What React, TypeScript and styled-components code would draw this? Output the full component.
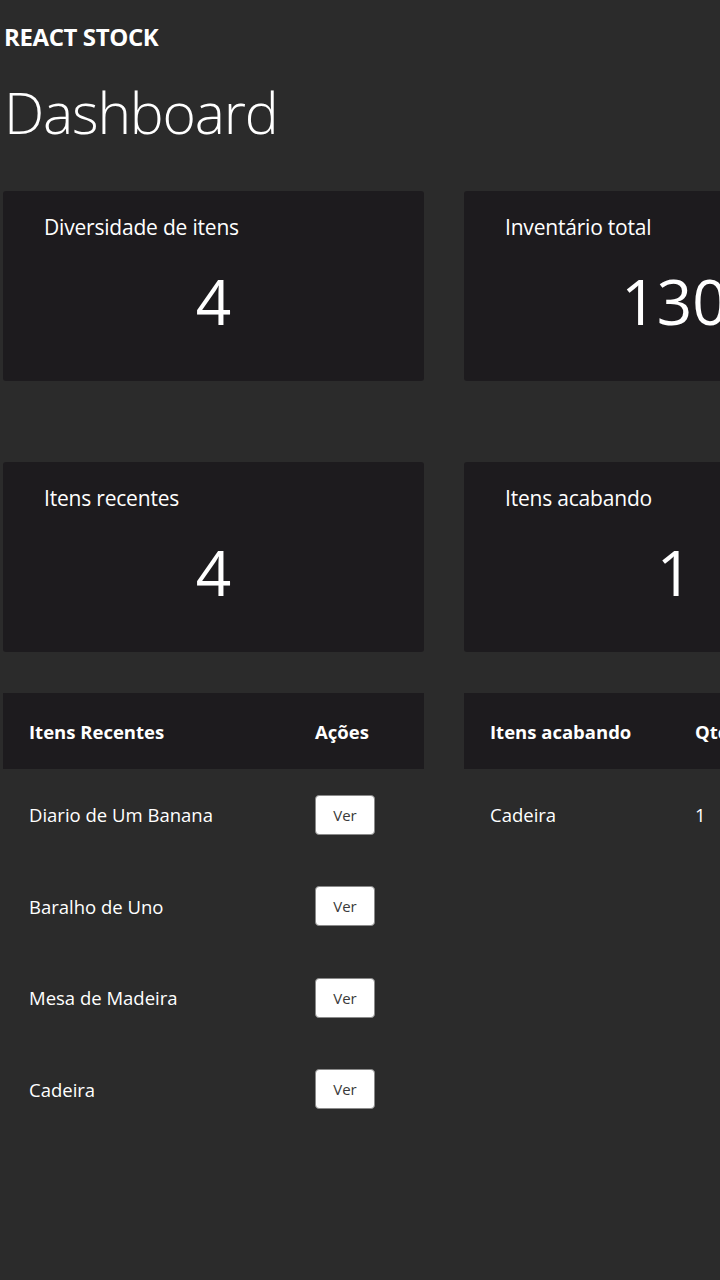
import React from "react";
import styled, { createGlobalStyle } from "styled-components";

const Global = createGlobalStyle`
  html, body {
    margin: 0;
    padding: 0;
    background: #2b2b2b;
    overflow: hidden;
  }
  body {
    font-family: "Open Sans", "Noto Sans", sans-serif;
    color: #ffffff;
  }
`;

const Page = styled.div`
  width: 720px;
  min-height: 1280px;
  overflow: hidden;
  padding: 0 0 0 3px;
  box-sizing: border-box;
`;

const Brand = styled.header`
  font-size: 24px;
  font-weight: 700;
  letter-spacing: -0.4px;
  height: 72px;
  display: flex;
  align-items: center;
  padding-left: 1px;
`;

const Title = styled.h1`
  margin: 0;
  font-size: 57px;
  font-weight: 300;
  letter-spacing: -1.2px;
  line-height: 80px;
  height: 80px;
  padding-left: 1px;
`;

const CardRow = styled.section<{ $mt: number }>`
  display: flex;
  align-items: flex-start;
  gap: 40px;
  margin-top: ${(p) => p.$mt}px;
`;

const Card = styled.div`
  flex: 0 0 421px;
  width: 421px;
  height: 190px;
  background: #1d1b1e;
  border-radius: 3px;
  box-sizing: border-box;
  padding: 22px 0 0 41px;
  display: flex;
  flex-direction: column;
`;

const CardLabel = styled.span`
  font-size: 21px;
  letter-spacing: -0.2px;
  line-height: 28px;
`;

const CardValue = styled.span`
  font-size: 62px;
  font-weight: 400;
  line-height: 70px;
  margin-top: 25px;
  text-align: center;
  padding-right: 41px;
`;

const Table = styled.table<{ $col: number }>`
  flex: 0 0 421px;
  width: 421px;
  border-collapse: collapse;
  font-size: 18.5px;
  th, td {
    padding: 0 0 0 26px;
    text-align: left;
  }
  th:first-child, td:first-child {
    width: ${(p) => p.$col}px;
  }
`;

const Head = styled.thead`
  background: #1d1b1e;
  th {
    height: 76px;
    font-weight: 700;
  }
`;

const Row = styled.tr`
  td {
    height: 91.5px;
  }
`;

const VerButton = styled.button`
  width: 60px;
  height: 40px;
  background: #ffffff;
  border: 1px solid #8a8a8a;
  border-radius: 4px;
  font-family: "Open Sans", sans-serif;
  font-size: 15px;
  color: #3a3a3a;
  padding: 0;
  cursor: pointer;
`;

const stats = [
  [
    { label: "Diversidade de itens", value: 4 },
    { label: "Inventário total", value: 130 },
  ],
  [
    { label: "Itens recentes", value: 4 },
    { label: "Itens acabando", value: 1 },
  ],
];

const recent = ["Diario de Um Banana", "Baralho de Uno", "Mesa de Madeira", "Cadeira"];
const ending = [{ name: "Cadeira", qty: 1 }];

export default function App() {
  return (
    <Page>
      <Global />
      <Brand>REACT STOCK</Brand>
      <Title>Dashboard</Title>
      {stats.map((row, i) => (
        <CardRow key={i} $mt={i === 0 ? 39 : 81}>
          {row.map((s) => (
            <Card key={s.label}>
              <CardLabel>{s.label}</CardLabel>
              <CardValue>{s.value}</CardValue>
            </Card>
          ))}
        </CardRow>
      ))}
      <CardRow $mt={41}>
        <Table $col={260}>
          <Head>
            <tr>
              <th>Itens Recentes</th>
              <th>Ações</th>
            </tr>
          </Head>
          <tbody>
            {recent.map((r) => (
              <Row key={r}>
                <td>{r}</td>
                <td>
                  <VerButton>Ver</VerButton>
                </td>
              </Row>
            ))}
          </tbody>
        </Table>
        <Table $col={179}>
          <Head>
            <tr>
              <th>Itens acabando</th>
              <th>Qtd.</th>
              <th>Ações</th>
            </tr>
          </Head>
          <tbody>
            {ending.map((r) => (
              <Row key={r.name}>
                <td>{r.name}</td>
                <td>{r.qty}</td>
                <td>
                  <VerButton>Ver</VerButton>
                </td>
              </Row>
            ))}
          </tbody>
        </Table>
      </CardRow>
    </Page>
  );
}
